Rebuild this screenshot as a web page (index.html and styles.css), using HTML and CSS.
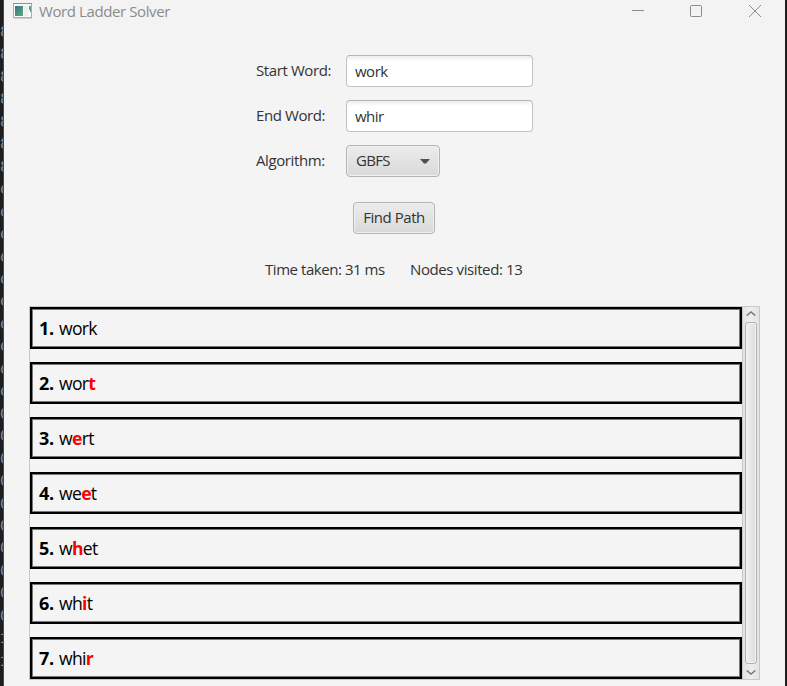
FILE: index.html
```html
<!DOCTYPE html>
<html lang="en">
<head>
<meta charset="utf-8">
<title>Word Ladder Solver</title>
<link rel="stylesheet" href="styles.css">
</head>
<body>
<div class="backdrop" aria-hidden="true"><div>8</div><div>8</div><div>8</div><div>8</div><div>8</div><div>8</div><div>8</div><div>o</div><div>o</div><div>o</div><div>o</div><div>o</div><div>o</div><div>o</div><div>o</div><div>o</div><div>o</div><div>0</div><div>0</div><div>0</div><div>0</div><div>0</div><div>0</div><div>0</div><div>0</div><div>0</div><div>0</div><div>1</div><div>1</div></div>
<main class="window">
  <header class="titlebar">
    <svg class="app-icon" width="20" height="16" viewBox="0 0 20 16">
      <defs><linearGradient id="tile" x1="0" y1="0" x2="1" y2="1"><stop offset="0" stop-color="#3c718f"/><stop offset="1" stop-color="#57ad77"/></linearGradient></defs>
      <rect x=".5" y=".5" width="18" height="14" fill="#fafafa" stroke="#a9adb3"/>
      <path d="M0 .5h19" stroke="#8c9198"/><path d="M1 15.5h18" stroke="#d0d0d0"/>
      <rect x="2" y="3" width="8" height="10" fill="url(#tile)"/>
      <rect x="11" y="3" width="4" height="10" fill="#eeeeee"/>
      <path d="M16 3h2v6h-1V7h-1z" fill="#59a58e"/>
    </svg>
    <h1 class="title">Word Ladder Solver</h1>
    <svg class="controls" width="132" height="14" viewBox="0 0 132 14" fill="none" stroke="#8b8b8b">
      <path d="M0 6.5h12"/>
      <rect x="58.5" y="1.5" width="11" height="11" rx="1"/>
      <path d="M117 1l12 12M129 1l-12 12"/>
    </svg>
  </header>
  <form class="form">
    <label for="start">Start Word:</label><input id="start" class="field" value="work">
    <label for="end">End Word:</label><input id="end" class="field" value="whir">
    <span class="label">Algorithm:</span>
    <button type="button" class="button combo"><span>GBFS</span><svg width="10" height="5" viewBox="0 0 10 5"><path d="M0 0h10L6 4.5H4z" fill="#505050"/></svg></button>
  </form>
  <button type="button" class="button find"><span>Find Path</span></button>
  <div class="stats"><span class="time">Time taken: 31 ms</span><span class="nodes">Nodes visited: 13</span></div>
  <section class="scroll">
    <ol class="path">
      <li><b class="num">1.</b><span>work</span></li>
      <li><b class="num">2.</b><span>wor<b>t</b></span></li>
      <li><b class="num">3.</b><span>w<b>e</b>rt</span></li>
      <li><b class="num">4.</b><span>we<b>e</b>t</span></li>
      <li><b class="num">5.</b><span>w<b>h</b>et</span></li>
      <li><b class="num">6.</b><span>wh<b>i</b>t</span></li>
      <li><b class="num">7.</b><span>whi<b>r</b></span></li>
    </ol>
    <div class="scrollbar">
      <svg width="10" height="5" viewBox="0 0 10 5" fill="none" stroke="#777" stroke-width="1.4"><path d="M.7 4.6L5 .9l4.3 3.7"/></svg>
      <div class="thumb"></div>
      <svg width="10" height="5" viewBox="0 0 10 5" fill="none" stroke="#777" stroke-width="1.4"><path d="M.7 .4L5 4.1 9.3 .4"/></svg>
    </div>
  </section>
</main>
</body>
</html>
```
FILE: styles.css
```css
* { box-sizing: border-box; }
body {
  margin: 0;
  width: 787px;
  height: 686px;
  overflow: hidden;
  display: flex;
  background: #1e1e1e;
  color: #333;
  font: 15px/20px "Open Sans", "Noto Sans", sans-serif;
  letter-spacing: -.4px;
}
.backdrop {
  width: 4px;
  height: 686px;
  flex: none;
  overflow: hidden;
  padding-top: 22px;
  border-right: 1px solid #4a4745;
  color: #7590b0;
  font: 16px/22.45px "Liberation Mono", monospace;
}
.window {
  width: 781px;
  height: 686px;
  flex: none;
  display: flex;
  flex-direction: column;
  background: #f4f4f4;
  border-radius: 0 3px 0 0;
}
.titlebar {
  height: 28px;
  flex: none;
  display: flex;
  align-items: flex-start;
  padding: 3px 21px 0 9px;
  background: #f3f3f3;
}
.app-icon { flex: none; }
.title {
  margin: -2px 0 0 6px;
  font-size: 15px;
  font-weight: 400;
  line-height: 20px;
  color: #8b8b8b;
  white-space: nowrap;
}
.controls { margin: 1px 0 0 auto; }
.form {
  display: grid;
  grid-template-columns: 90px 187px;
  grid-auto-rows: 32px;
  row-gap: 13px;
  align-items: center;
  margin: 27px 0 0 252px;
  white-space: nowrap;
}
.form label, .label { padding-bottom: 2px; }
.field {
  width: 187px;
  height: 32px;
  padding: 0 8px;
  border: 1px solid #c3c3c3;
  border-top-color: #b5b5b5;
  border-radius: 4px;
  outline: 0;
  background: linear-gradient(#ededed, #fff 5px);
  color: #333;
  font: inherit;
  letter-spacing: -.5px;
}
.button {
  height: 32px;
  padding: 0 9px 2px;
  border: 1px solid #b4b4b4;
  border-radius: 4px;
  background: linear-gradient(#ececec, #d9d9d9);
  box-shadow: inset 0 0 0 1px #f0f0f0;
  color: #333;
  font: inherit;
  letter-spacing: -.45px;
  white-space: nowrap;
}
.combo {
  width: 94px;
  display: flex;
  align-items: center;
  justify-content: space-between;
  letter-spacing: -.7px;
}
.combo svg { margin-top: 2px; }
.find { width: 82px; margin: 25px 0 0 349px; }
.stats {
  display: flex;
  height: 20px;
  margin: 25px 0 0 261px;
  white-space: nowrap;
}
.time { width: 145px; letter-spacing: -.45px; }
.scroll {
  display: flex;
  justify-content: space-between;
  width: 731px;
  height: 374px;
  margin: 27px 0 0 25px;
  border: 1px solid #c8c8c8;
}
.path {
  display: flex;
  flex-direction: column;
  gap: 13px;
  width: 712px;
  margin: 0;
  padding: 0;
  list-style: none;
}
.path li {
  display: flex;
  height: 42px;
  flex: none;
  align-items: center;
  padding: 0 7px 1px;
  border: 2px solid #000;
  box-shadow: inset 0 0 0 1px #777;
  color: #000;
  font-size: 17.6px;
  letter-spacing: -.7px;
  white-space: nowrap;
}
.num { width: 20px; font-size: 18px; letter-spacing: -.4px; }
.path span b { color: #f00; }
.scrollbar {
  width: 17px;
  display: flex;
  flex-direction: column;
  align-items: center;
  padding: 4px 1px 4px 0;
  border-left: 1px solid #c8c8c8;
  background: linear-gradient(90deg, #e3e3e3, #eee 50%, #e3e3e3);
}
.scrollbar svg { flex: none; }
.thumb {
  width: 12px;
  flex: 1;
  margin: 6px 0;
  border: 1px solid #b0b0b0;
  border-radius: 3px;
  background: linear-gradient(90deg, #f1f1f1, #dcdcdc);
  box-shadow: inset 0 0 0 1px #f4f4f4;
}
```
